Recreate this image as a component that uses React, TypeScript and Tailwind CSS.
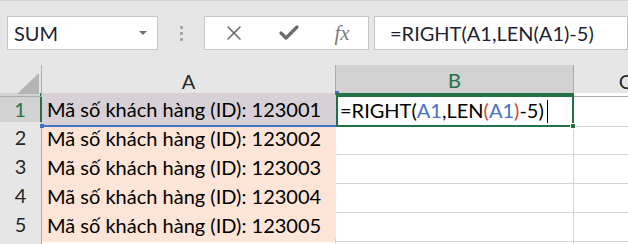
import { X, Check } from 'lucide-react';

const FONT = { fontFamily: 'Lato, "Open Sans", sans-serif' };

const rows = ['123001', '123002', '123003', '123004', '123005'];

function Toolbar() {
  return (
    <div className="h-[65px] bg-[#e6e6e6] border-t border-[#d4d4d4] flex items-start pt-[15px]">
      {/* name box */}
      <div className="ml-[7px] w-[151px] h-[34px] bg-white border border-[#c6c6c6] flex items-center justify-between pl-[6px] pr-[10px]">
        <span className="text-[20px] text-[#1f1f2f] leading-none">SUM</span>
        <span className="w-0 h-0 border-l-[4px] border-r-[4px] border-t-[4px] border-l-transparent border-r-transparent border-t-[#707070]" />
      </div>

      {/* drag dots */}
      <div className="w-[46px] h-[34px] flex flex-col items-center justify-center gap-[3px]">
        <span className="w-[3px] h-[3px] bg-[#a9a9a9]" />
        <span className="w-[3px] h-[3px] bg-[#a9a9a9]" />
        <span className="w-[3px] h-[3px] bg-[#a9a9a9]" />
      </div>

      {/* cancel / enter / fx */}
      <div className="w-[165px] h-[34px] bg-white border border-[#c6c6c6] flex items-center">
        <div className="w-[56px] flex justify-center pl-[1px]">
          <X size={24} strokeWidth={1.6} color="#6b6b6b" />
        </div>
        <div className="w-[55px] flex justify-center">
          <Check size={24} strokeWidth={3.2} color="#6b6b6b" />
        </div>
        <div className="flex-1 flex justify-center">
          <span
            className="italic text-[21px] text-[#7a7a7a] leading-none"
            style={{ fontFamily: '"Liberation Serif", serif' }}
          >
            fx
          </span>
        </div>
      </div>

      {/* formula bar */}
      <div className="ml-[5px] w-[254px] h-[34px] bg-white border border-[#c6c6c6] flex items-center pl-[15px]">
        <span className="text-[20px] text-[#1f1f2f] leading-none">=RIGHT(A1,LEN(A1)-5)</span>
      </div>
    </div>
  );
}

function HeaderRow() {
  return (
    <div className="grid grid-cols-[42px_294px_238px_1fr] h-[28px] bg-[#e6e6e6]">
      <div className="relative border-r border-b border-[#ababab]">
        <svg className="absolute right-[2px] bottom-[2px]" width="22" height="21" viewBox="0 0 22 21">
          <polygon points="22,0 22,21 0,21" fill="#b4b4b4" />
        </svg>
      </div>
      <div className="border-r border-b border-[#ababab] flex items-center justify-center text-[20px] text-[#262626]">A</div>
      <div className="bg-[#d2d2d2] border-r border-[#ababab] border-b-2 border-b-[#217346] flex items-center justify-center text-[20px] text-[#217346]">B</div>
      <div className="border-b border-[#ababab] flex items-center justify-end text-[20px] text-[#262626] overflow-hidden">
        <span className="mr-[-4px]">C</span>
      </div>
    </div>
  );
}

function Row({ idx, id }: { idx: number; id: string }) {
  const active = idx === 1;
  return (
    <div className="grid grid-cols-[42px_294px_238px_1fr] h-[29px]">
      <div
        className={
          active
            ? 'bg-[#d2d2d2] border-r-2 border-r-[#217346] border-b border-b-[#ababab] flex items-end justify-center pb-[2px] text-[20px] text-[#217346]'
            : 'bg-[#e6e6e6] border-r border-b border-[#ababab] flex items-end justify-center pb-[2px] text-[20px] text-[#262626]'
        }
      >
        {idx}
      </div>
      <div
        className={
          active
            ? 'relative bg-[#d7d0d6] border-b-2 border-b-[#4472c4] flex items-end pl-[5px] pb-[1px] text-[20px] text-black'
            : 'bg-[#fce4d6] flex items-end pl-[5px] pb-[2px] text-[20px] text-black'
        }
      >
        Mã số khách hàng (ID): {id}
        {active && (
          <>
            <span className="absolute left-[-2px] bottom-[-3px] w-[4px] h-[4px] bg-[#4472c4]" />
            <span className="absolute right-[-3px] top-[-2px] w-[4px] h-[4px] bg-[#4472c4]" />
          </>
        )}
      </div>
      {active ? (
        <div className="relative border-2 border-[#217346] flex items-end pl-[2px] text-[20px] text-black">
          <span>
            =RIGHT(<span className="text-[#4472c4]">A1</span>,LEN<span className="text-[#e0403c]">(</span>
            <span className="text-[#4472c4]">A1</span>
            <span className="text-[#e0403c]">)</span>-5)
          </span>
          <span className="ml-[3px] mb-[2px] w-[1px] h-[23px] bg-black" />
          <span className="absolute right-[-4px] bottom-[-4px] w-[6px] h-[6px] bg-[#217346] border border-white" />
        </div>
      ) : (
        <div className="border-r border-b border-[#d4d4d4]" />
      )}
      <div className="border-b border-[#d4d4d4]" />
    </div>
  );
}

export default function App() {
  return (
    <div className="w-[628px] h-[244px] overflow-hidden bg-white" style={FONT}>
      <Toolbar />
      <HeaderRow />
      {rows.map((id, i) => (
        <Row key={id} idx={i + 1} id={id} />
      ))}
      <div className="grid grid-cols-[42px_294px_238px_1fr] h-[20px]">
        <div className="bg-[#e6e6e6] border-r border-[#ababab]" />
        <div className="border-r border-[#d4d4d4]" />
        <div className="border-r border-[#d4d4d4]" />
        <div />
      </div>
    </div>
  );
}
